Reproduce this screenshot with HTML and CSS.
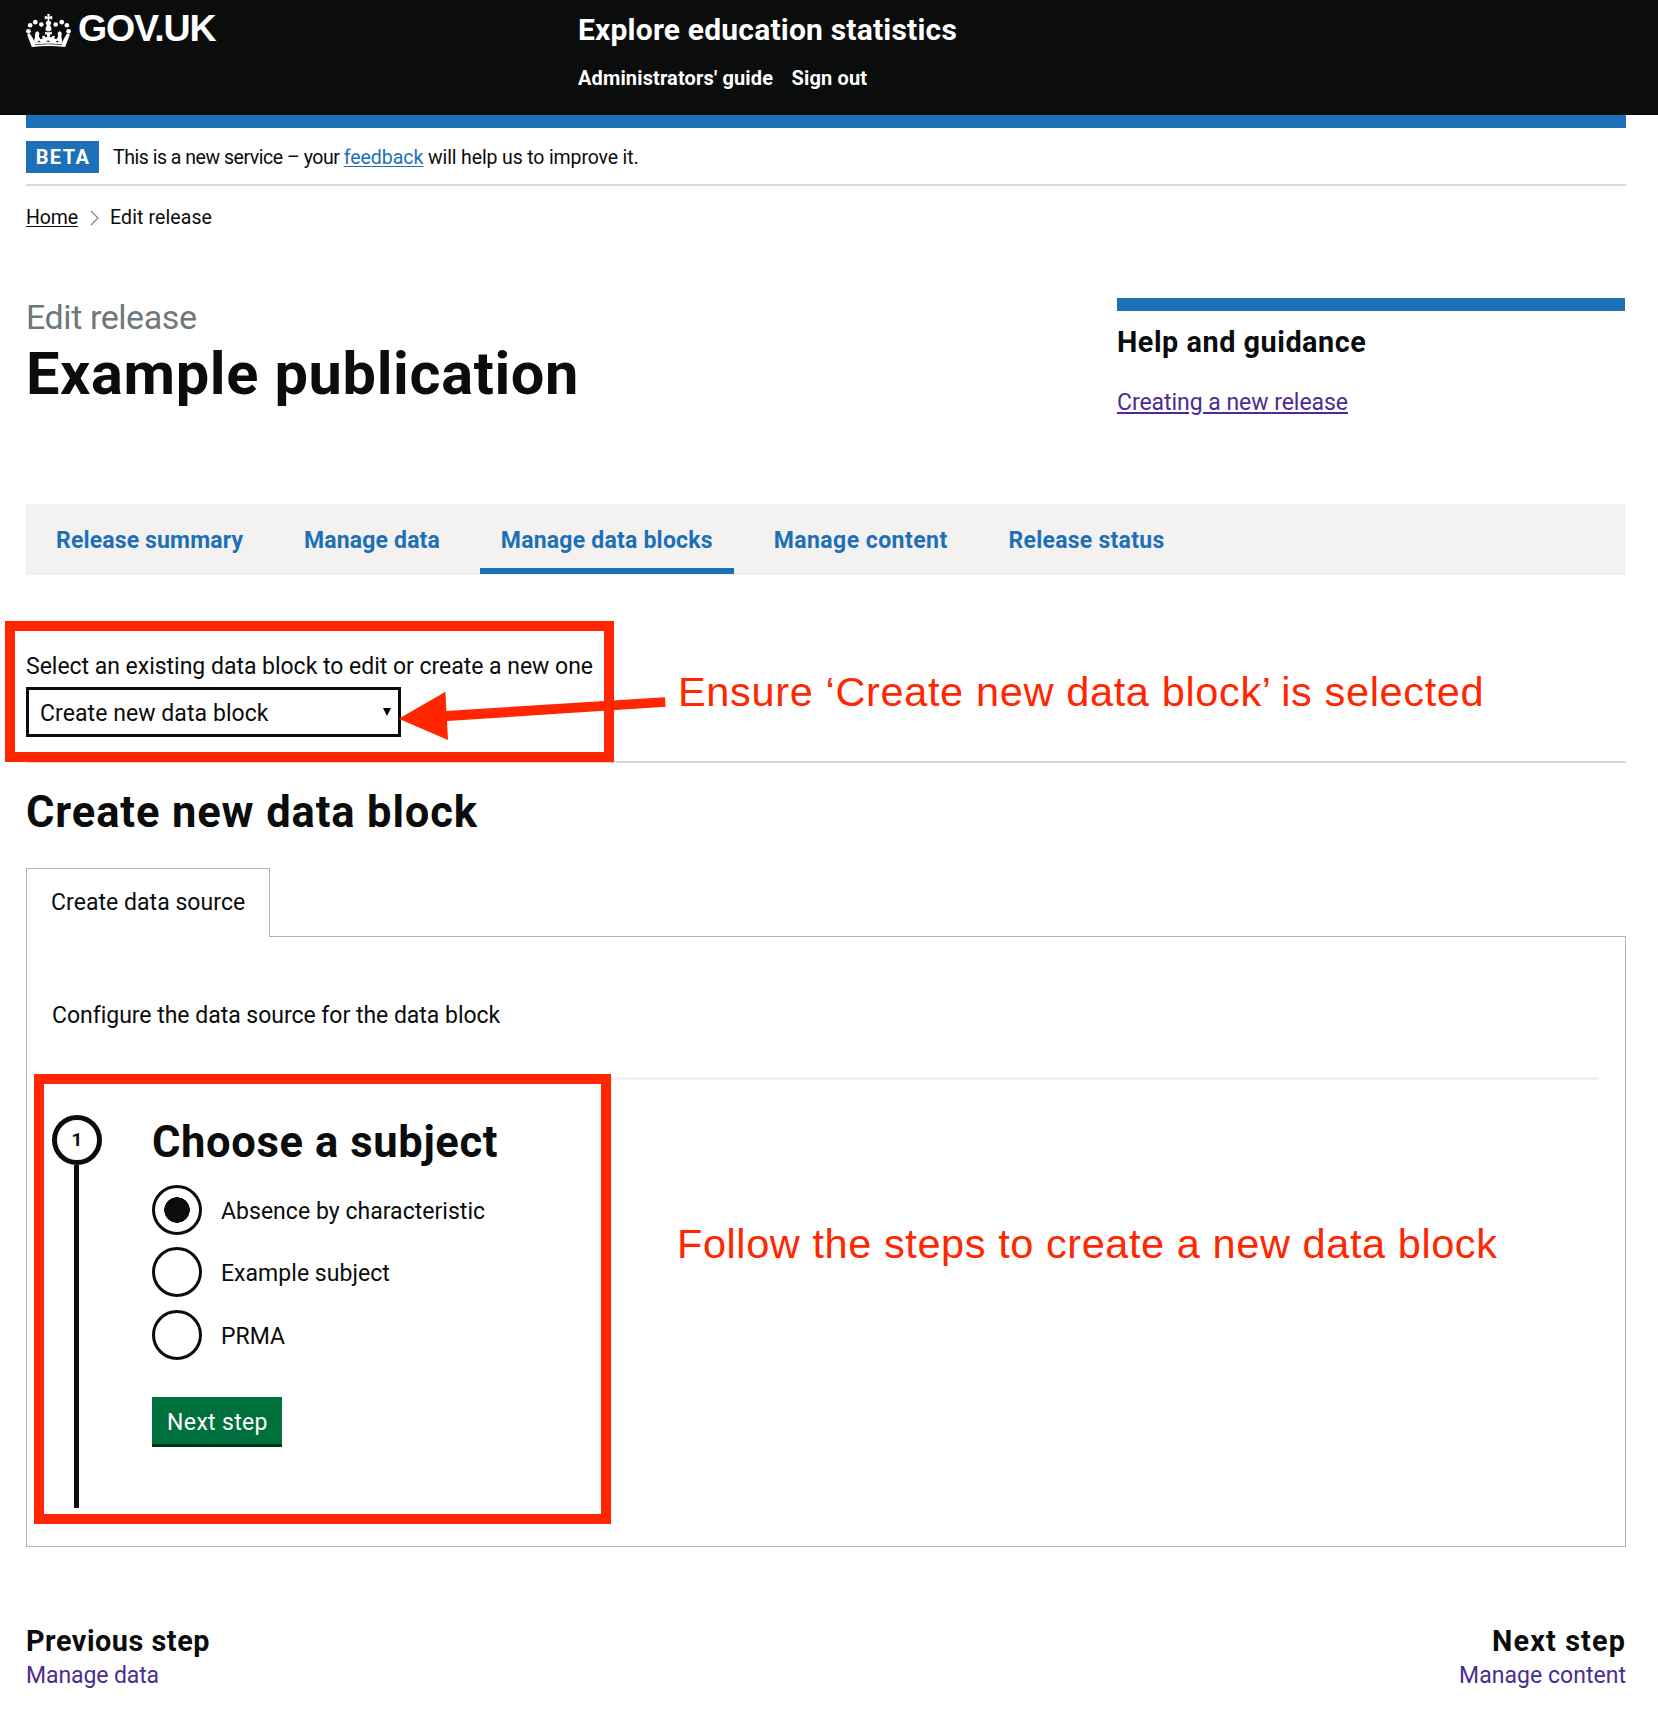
FILE: index.html
```html
<!DOCTYPE html>
<html lang="en">
<head>
<meta charset="utf-8">
<title>Explore education statistics</title>
<link rel="stylesheet" href="styles.css">
</head>
<body>
<header class="header">
  <div class="logo">
    <svg class="crown" viewBox="0 0 132 97" aria-hidden="true">
      <g fill="#fff">
        <circle cx="7" cy="51" r="6.8"/><circle cx="12" cy="33" r="6.8"/><circle cx="27" cy="24" r="6.8"/><circle cx="45" cy="31" r="6.8"/>
        <circle cx="125" cy="51" r="6.8"/><circle cx="120" cy="33" r="6.8"/><circle cx="105" cy="24" r="6.8"/><circle cx="87" cy="31" r="6.8"/>
        <path d="M62 0h8l-2 8 9-3v11l-9-3 1 7c5 2 6 6 4 10l-2 3 4 10c0 5-4 8-9 8s-9-3-9-8l4-10-2-3c-2-4-1-8 4-10l1-7-9 3V5l9 3z"/>
        <path d="M3 60l8-3 10 16 4 11q41-5 82 0l4-11 10-16 8 3-14 37q-49-6-98 0z"/>
        <path d="M27 56l6-6 6 6-1 11 5 7 6-2-2-6c4-4 9-2 9 2l7-1-3-8-4 1v-8l5 2h10l5-2v8l-4-1-3 8 7 1c0-4 5-6 9-2l-2 6 6 2 5-7-1-11 6-6 6 6-1 12 3 15-8 2-7-7-8 7-12-2-7-6-7 6-12 2-8-7-7 7-8-2 3-15z"/>
      </g>
      <path d="M26 90q40-4 80 0" fill="none" stroke="#0b0c0c" stroke-width="2"/>
    </svg>
    <span class="wordmark">GOV.UK</span>
  </div>
  <div class="service">
    <div class="service-name">Explore education statistics</div>
    <nav class="service-nav"><span>Administrators' guide</span><span>Sign out</span></nav>
  </div>
</header>
<main class="page">
  <div class="phase">
    <strong class="tag">BETA</strong>
    <span class="phase-text">This is a new service – your <a class="link">feedback</a><span class="phase-tail"> will help us to improve it.</span></span>
  </div>
  <nav class="crumbs">
    <a class="crumb-link">Home</a>
    <svg class="chevron" viewBox="0 0 9 16"><path d="M1 1l7 7-7 7" fill="none" stroke="#7d8589" stroke-width="1.2"/></svg>
    <span class="crumb-current">Edit release</span>
  </nav>
  <div class="title-row">
    <div>
      <div class="caption">Edit release</div>
      <h1 class="h1">Example publication</h1>
    </div>
    <aside class="help">
      <h2 class="h3">Help and guidance</h2>
      <a class="visited help-link">Creating a new release</a>
    </aside>
  </div>
  <nav class="tabsnav">
    <a class="item summary">Release summary</a>
    <a class="item data">Manage data</a>
    <a class="item current">Manage data blocks</a>
    <a class="item content">Manage content</a>
    <a class="item status">Release status</a>
  </nav>
  <section class="chooser">
    <label class="label">Select an existing data block to edit or create a new one</label>
    <div class="select"><span>Create new data block</span><svg class="caret" viewBox="0 0 8 8"><path d="M0 0h8L4 8z"/></svg></div>
  </section>
  <h2 class="h2">Create new data block</h2>
  <div class="tab">Create data source</div>
  <section class="panel">
    <p class="intro">Configure the data source for the data block</p>
    <div class="rule"></div>
    <div class="step">
      <div class="marker"><div class="num">1</div><div class="stem"></div></div>
      <div class="step-body">
        <h2 class="h2 step-title">Choose a subject</h2>
        <div class="radios">
          <label class="radio"><span class="dot on"></span><span class="radio-text">Absence by characteristic</span></label>
          <label class="radio"><span class="dot"></span><span class="radio-text">Example subject</span></label>
          <label class="radio last"><span class="dot"></span><span class="radio-text">PRMA</span></label>
        </div>
        <button class="button">Next step</button>
      </div>
    </div>
  </section>
  <footer class="pager">
    <div><div class="h3">Previous step</div><a class="visited pager-link previous-link">Manage data</a></div>
    <div class="right"><div class="h3 next">Next step</div><a class="visited pager-link">Manage content</a></div>
  </footer>
</main>
<div class="mark box-one"></div>
<div class="mark box-two"></div>
<svg class="arrow" viewBox="398 691 268 50"><path d="M398.7 718.7L445.5 691.7 446.3 711 665 697.2 665.6 706.7 447 721 448 740z" fill="#ff2600"/></svg>
<div class="note note-one">Ensure ‘Create new data block<span class="quote">’</span> is selected</div>
<div class="note note-two">Follow the steps to create a new data block</div>
</body>
</html>
```
FILE: styles.css
```css
* { box-sizing: border-box; }
body { margin: 0; height: 1728px; position: relative; background: #fff; color: #0b0c0c; font: 400 23px/30px Roboto, "Noto Sans", sans-serif; white-space: nowrap; overflow: hidden; }
h1, h2, p { margin: 0; }
.header { height: 115px; background: #0b0c0c; color: #fff; display: flex; padding-left: 26px; }
.logo { width: 552px; display: flex; gap: 7px; padding-top: 8px; align-items: flex-start; }
.crown { width: 45px; height: 33px; margin-top: 6px; }
.wordmark { font: 700 37.5px/40px "Liberation Sans", Arial, sans-serif; letter-spacing: -.032em; }
.service { padding-top: 14px; font-weight: 700; }
.service-name { font-size: 30px; line-height: 32px; letter-spacing: .0067em; }
.service-nav { display: flex; gap: 18.5px; margin-top: 19px; font-size: 20px; line-height: 26px; letter-spacing: .007em; }
.page { width: 1600px; margin-left: 26px; }
.phase { height: 71px; border-top: 13px solid #1d70b8; border-bottom: 2px solid #d9dadb; padding-top: 1px; display: flex; align-items: center; gap: 14px; font-size: 19.5px; }
.tag { background: #1d70b8; color: #fff; width: 73px; height: 32px; display: flex; align-items: center; justify-content: center; padding: 1px 0 0 1px; font-size: 20px; letter-spacing: .07em; }
.phase-text { padding-top: 2px; letter-spacing: -.0245em; }
.phase-tail { letter-spacing: -.007em; white-space: pre; }
.link { color: #1d70b8; letter-spacing: -.001em; text-decoration: underline; text-underline-offset: 2px; }
.crumbs { display: flex; align-items: center; height: 26px; margin-top: 19px; font-size: 19.5px; line-height: 26px; }
.crumb-link { letter-spacing: -.006em; text-decoration: underline; text-underline-offset: 2px; }
.crumb-current { letter-spacing: .0055em; }
.chevron { width: 9px; height: 16px; margin: 0 11px 0 12px; }
.title-row { display: flex; justify-content: space-between; height: 206px; margin-top: 67px; }
.caption { font-size: 34px; line-height: 36px; margin-top: 1px; letter-spacing: -.0125em; color: #6f777b; }
.h1 { font-size: 59.5px; line-height: 66px; margin-top: 6px; letter-spacing: .011em; }
.help { width: 508px; height: 130px; margin-right: 1px; border-top: 13px solid #1d70b8; padding-top: 14px; }
.h3 { font-size: 28.8px; line-height: 34px; font-weight: 700; letter-spacing: .0185em; }
.help-link { display: block; margin-top: 29px; letter-spacing: -.0019em; text-decoration: underline; text-underline-offset: 2px; }
.visited { color: #4c2c92; }
.tabsnav { display: flex; gap: 18.8px; height: 71px; padding-left: 9px; background: #f3f2f1; color: #1d70b8; font-weight: 700; }
.item { height: 70px; padding: 0 21px; line-height: 73px; }
.summary { letter-spacing: .0065em; }
.data { letter-spacing: .0068em; }
.current { letter-spacing: .0095em; border-bottom: 6px solid #1d70b8; }
.content { letter-spacing: .0197em; }
.status { letter-spacing: .0115em; }
.chooser { height: 188px; border-bottom: 2px solid #d5d6d7; padding-top: 77px; }
.label { display: block; letter-spacing: -.0009em; }
.select { width: 375px; height: 50px; margin-top: 5px; border: 3px solid #0b0c0c; padding: 0 7px 0 11px; display: flex; align-items: center; justify-content: space-between; letter-spacing: .003em; }
.select span { padding-top: 3px; }
.caret { width: 8px; height: 8px; }
.h2 { font-size: 43.5px; line-height: 50px; font-weight: 700; margin-top: 25px; letter-spacing: .0203em; }
.tab { width: 244px; height: 69px; margin-top: 30px; margin-bottom: -1px; border: 1px solid #b1b4b6; border-bottom: 0; background: #fff; position: relative; line-height: 67px; padding-left: 24px; letter-spacing: .002em; }
.panel { height: 611px; border: 1px solid #b1b4b6; padding: 64px 26px 0 25px; }
.intro { letter-spacing: -.001em; }
.rule { height: 3px; background: #f1f1f1; margin: 46px 0 35px; }
.step { display: flex; gap: 50px; height: 393px; }
.marker { width: 50px; display: flex; flex-direction: column; align-items: center; }
.num { width: 50px; height: 50px; flex: none; border: 5px solid #0b0c0c; border-radius: 50%; font-size: 19px; font-weight: 700; line-height: 40px; text-align: center; }
.stem { width: 5px; flex: 1; margin-right: 1px; background: #0b0c0c; }
.step-title { margin-top: 3px; letter-spacing: .0145em; }
.radios { display: flex; flex-direction: column; gap: 12px; margin-top: 17px; }
.radio { display: flex; align-items: center; gap: 19px; height: 50px; letter-spacing: .0015em; }
.last { margin-top: 1px; }
.radio-text { padding-top: 3px; }
.dot { width: 50px; height: 50px; border: 3px solid #0b0c0c; border-radius: 50%; }
.on { background: radial-gradient(circle, #0b0c0c 12.5px, #fff 13px); }
.button { display: block; width: 130px; height: 50px; margin-top: 37px; padding: 4px 0 0 1px; border: 0; border-bottom: 3px solid #003618; background: #00703c; color: #fff; font: inherit; letter-spacing: .0145em; }
.pager { display: flex; justify-content: space-between; margin-top: 77px; }
.pager-link { display: block; margin-top: 3px; letter-spacing: .0017em; }
.previous-link { letter-spacing: -.0045em; }
.next { letter-spacing: .0397em; }
.right { text-align: right; }
.mark { position: absolute; border: 10px solid #ff2600; }
.box-one { left: 5px; top: 621px; width: 609px; height: 141px; }
.box-two { left: 34px; top: 1074px; width: 577px; height: 450px; }
.arrow { position: absolute; left: 398px; top: 691px; width: 268px; height: 50px; }
.note { position: absolute; color: #ff2600; font: 41.5px/48px "Liberation Sans", Arial, sans-serif; }
.note-one { left: 678px; top: 668px; letter-spacing: .0155em; }
.quote { letter-spacing: -.05em; }
.note-two { left: 677px; top: 1220px; letter-spacing: .0138em; }
```
